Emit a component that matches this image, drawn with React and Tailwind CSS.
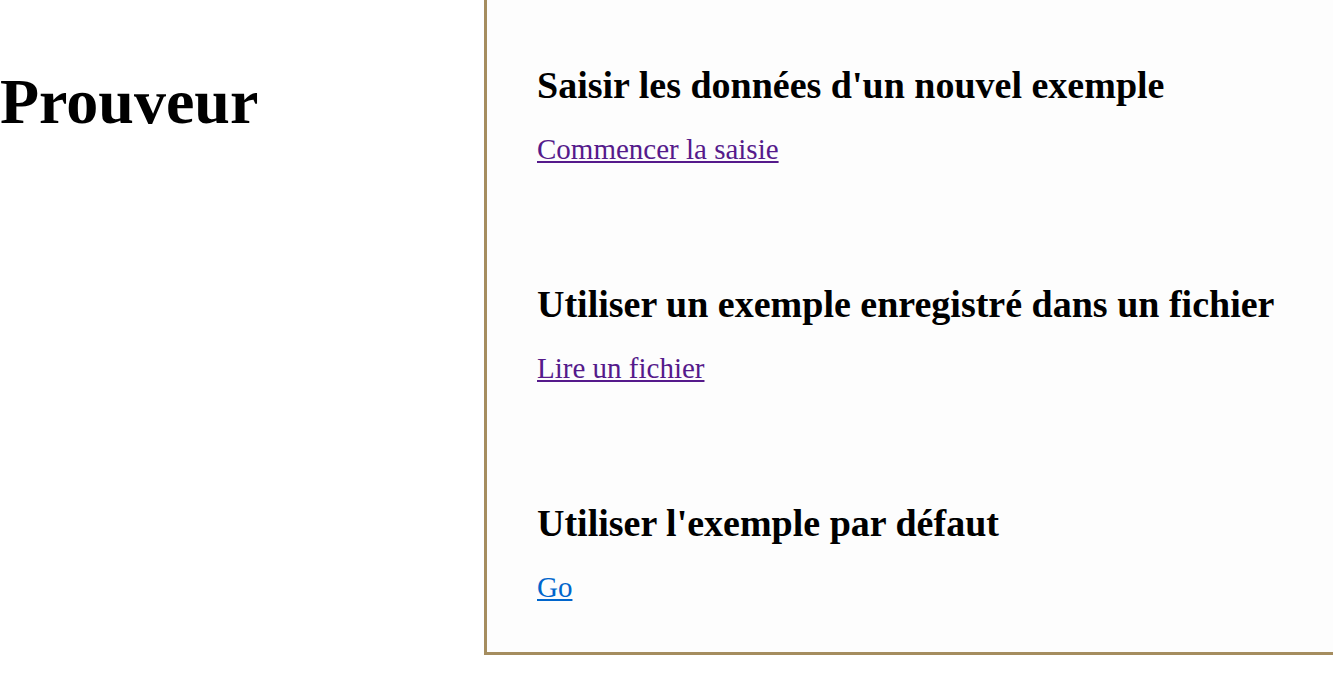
import React from "react";

const Section = ({ title, link, visited }) => (
  <div>
    <h2 className="text-[38px] font-bold leading-[40px] text-black">{title}</h2>
    <a
      href="#"
      className={
        "mt-[27px] inline-block text-[29px] leading-[34px] underline " +
        (visited ? "text-[#551a8b]" : "text-[#0066cc]")
      }
    >
      {link}
    </a>
  </div>
);

export default function App() {
  return (
    <div className="flex h-[690px] bg-white font-['Liberation_Serif',serif]">
      <div className="w-[484px] shrink-0">
        <h1 className="mt-[70px] text-[64px] font-bold leading-[64px] text-black">Prouveur</h1>
      </div>
      <div className="flex h-[655px] flex-1 flex-col gap-[118px] border-b-[3px] border-l-[3px] border-[#a58d5f] bg-[#fdfdfd] pl-[50px] pt-[65px]">
        <Section title="Saisir les données d'un nouvel exemple" link="Commencer la saisie" visited />
        <Section title="Utiliser un exemple enregistré dans un fichier" link="Lire un fichier" visited />
        <Section title="Utiliser l'exemple par défaut" link="Go" />
      </div>
    </div>
  );
}
